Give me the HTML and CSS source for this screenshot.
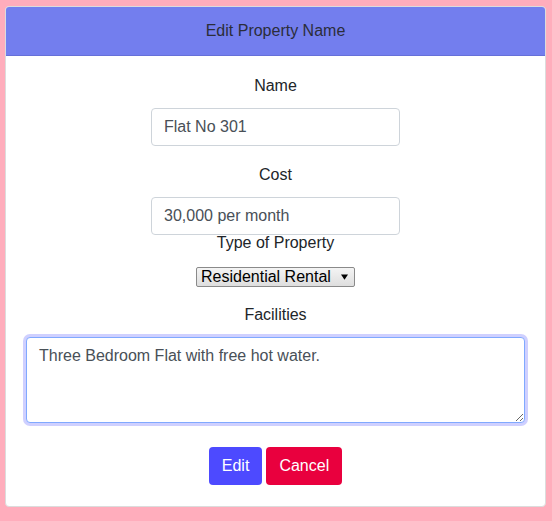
FILE: index.html
```html
<!DOCTYPE html>
<html lang="en">
<head>
<meta charset="utf-8">
<title>Edit Property Name</title>
<link rel="stylesheet" href="styles.css">
</head>
<body>
  <div class="card">
    <div class="card-header">Edit Property Name</div>
    <form class="card-body">
      <div class="group group-name">
        <label class="label" for="name">Name</label>
        <input class="field" id="name" type="text" value="Flat No 301">
      </div>
      <div class="group group-tight">
        <label class="label" for="cost">Cost</label>
        <input class="field" id="cost" type="text" value="30,000 per month">
      </div>
      <div class="group group-select">
        <label class="label" for="type">Type of Property</label>
        <div class="select-line">
          <select class="select" id="type">
            <option>Residential Rental</option>
          </select>
        </div>
      </div>
      <div class="group group-area">
        <label class="label" for="fac">Facilities</label>
        <textarea class="area" id="fac">Three Bedroom Flat with free hot water.</textarea>
      </div>
      <div class="actions">
        <button type="button" class="btn btn-edit">Edit</button>
        <button type="button" class="btn btn-cancel">Cancel</button>
      </div>
    </form>
  </div>
</body>
</html>
```
FILE: styles.css
```css
html, body {
  margin: 0;
  padding: 0;
}
body {
  background: #ffadbc;
  font-family: "Liberation Sans", Arial, sans-serif;
  font-size: 16px;
  line-height: 24px;
  color: #212529;
  padding: 6px 6px 15px 5px;
  height: 521px;
  box-sizing: border-box;
}
.card {
  background: #fff;
  border: 1px solid #dcdcdc;
  border-radius: 4px;
  overflow: hidden;
}
.card-header {
  background: #737eee;
  border-bottom: 1px solid #6670d8;
  padding: 12px 20px;
  text-align: center;
  color: #2b2d3a;
}
.card-body {
  display: flex;
  flex-direction: column;
  align-items: center;
  padding: 18px 20px 21px;
  margin: 0;
}
.group {
  display: flex;
  flex-direction: column;
  align-items: center;
  width: 100%;
  margin-bottom: 16px;
}
.group-name {
  margin-bottom: 17px;
}
.group-tight {
  margin-bottom: -4px;
}
.group-select {
  margin-bottom: 14px;
}
.group-area {
  margin-bottom: 24px;
}
.label {
  margin-bottom: 10px;
}
.field {
  box-sizing: border-box;
  width: 249px;
  height: 38px;
  padding: 6px 12px;
  border: 1px solid #ced4da;
  border-radius: 4px;
  font-family: inherit;
  font-size: 16px;
  line-height: 24px;
  color: #495057;
  background: #fff;
  margin: 0;
}
.select-line {
  height: 24px;
  display: flex;
  align-items: center;
}
.select {
  -webkit-appearance: none;
  appearance: none;
  box-sizing: border-box;
  width: 159px;
  height: 20px;
  margin: 0;
  padding: 0 20px 0 4px;
  font-family: inherit;
  font-size: 16px;
  line-height: 18px;
  color: #000;
  border: 1px solid #8a8a8a;
  border-radius: 2px;
  background-color: #e9e9e9;
  background-image: url("data:image/svg+xml,%3Csvg xmlns='http://www.w3.org/2000/svg' width='8' height='6' viewBox='0 0 8 6'%3E%3Cpath d='M0 0h8L4 6z' fill='%23000'/%3E%3C/svg%3E"), linear-gradient(#f4f4f4, #dedede);
  background-repeat: no-repeat, no-repeat;
  background-position: right 6px center, 0 0;
  background-size: 7px 6px, 100% 100%;
}
.area {
  box-sizing: border-box;
  width: 100%;
  height: 86px;
  padding: 6px 12px;
  margin: 0;
  border: 1px solid #80a9ff;
  border-radius: 4px;
  box-shadow: 0 0 0 3px #cfd0ff;
  font-family: inherit;
  font-size: 16px;
  line-height: 24px;
  color: #495057;
  outline: none;
  resize: vertical;
}
.actions {
  display: flex;
  gap: 4px;
  justify-content: center;
}
.btn {
  font-family: inherit;
  font-size: 16px;
  line-height: 24px;
  padding: 6px 12px;
  border: 1px solid transparent;
  border-radius: 4px;
  color: #fff;
  margin: 0;
}
.btn-edit {
  background: #4d4aff;
}
.btn-cancel {
  background: #e9003e;
}
```
